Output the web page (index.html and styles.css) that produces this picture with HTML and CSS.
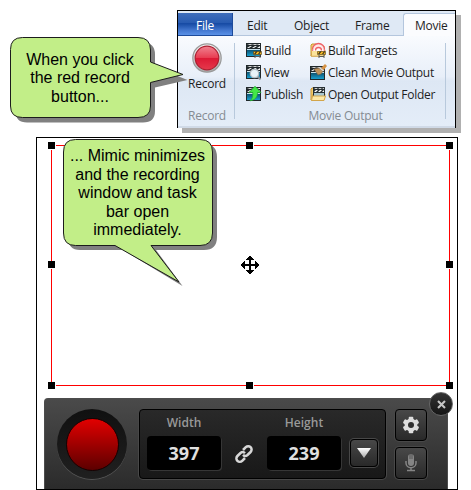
FILE: index.html
```html
<!DOCTYPE html>
<html lang="en">
<head>
<meta charset="utf-8">
<title>Mimic recording</title>
<link rel="stylesheet" href="styles.css">
</head>
<body>
<svg width="0" height="0" class="defs">
  <defs>
    <linearGradient id="clapBody" x1="0" y1="0" x2="0" y2="1"><stop offset="0" stop-color="#0d5270"/><stop offset="1" stop-color="#18a0d0"/></linearGradient>
    <g id="clap">
      <path d="M0 1h15v14H0z" fill="#20282b"/>
      <path d="M1 2l3 1h3l-3-1zM6 2l3 1h3l-3-1zM11 2l2 1h1V2zM1 6l3-2h2L3 6zM6 6l3-2h2L8 6zM11 6l3-2v2z" fill="#f4f4f4"/>
      <path d="M1 8h13v6H1z" fill="url(#clapBody)"/>
      <path d="M1 7h13v1H1z" fill="#c8e2ec"/>
    </g>
    <g id="folder">
      <path d="M1 14V3l1-1h4l1 2h7v10z" fill="#f4cf70" stroke="#c99634"/>
      <path d="M1 14l2-6h12l-1 6z" fill="#fde9a6" stroke="#d5a648"/>
    </g>
    <g id="barrier">
      <path d="M7.500 9.500h8v3h-8z" fill="#f6b71d" stroke="#4b3c18" stroke-width=".6"/>
      <path d="M8 12l2-2.500h1.500l-2 2.500zM12 12l2-2.500h1.300l-2 2.500z" fill="#30291b"/>
      <path d="M9 12.500V16M14 12.500V16M9 14.500h5" stroke="#5b5b58"/>
    </g>
  </defs>
</svg>
<main class="stage">
  <section class="ribbon">
    <nav class="tabs">
      <span class="tab file">File</span><span class="tab edit">Edit</span><span class="tab object">Object</span><span class="tab frame">Frame</span><span class="tab movie">Movie</span>
    </nav>
    <div class="groups">
      <div class="group record">
        <svg width="30" height="30" viewBox="0 0 30 30">
          <defs>
            <linearGradient id="ring" x2="0" y2="1"><stop stop-color="#f6f6f6"/><stop offset="1" stop-color="#aaa"/></linearGradient>
            <linearGradient id="red" x2="0" y2="1"><stop stop-color="#f08391"/><stop offset=".48" stop-color="#e83e53"/><stop offset=".5" stop-color="#dc1834"/><stop offset="1" stop-color="#e5394c"/></linearGradient>
          </defs>
          <circle cx="15" cy="15" r="14.200" fill="url(#ring)" stroke="#999" stroke-width="1.200"/>
          <circle cx="15" cy="15" r="11.800" fill="url(#red)" stroke="#ac1e30" stroke-width="1.200"/>
        </svg>
        <span class="big-label">Record</span>
        <span class="caption">Record</span>
      </div>
      <div class="group output">
        <div class="commands">
          <div class="column first">
            <div class="cmd"><svg width="17" height="17" viewBox="0 0 17 17"><use href="#clap"/><use href="#barrier"/></svg><span>Build</span></div>
            <div class="cmd"><svg width="17" height="17" viewBox="0 0 17 17"><use href="#clap"/><path d="M11 12l3.500 3.500" stroke="#8b9298" stroke-width="2"/><circle cx="8.500" cy="9.500" r="4.200" fill="#e8f3f8" stroke="#b3bdc4" stroke-width="1.300"/></svg><span>View</span></div>
            <div class="cmd"><svg width="17" height="17" viewBox="0 0 17 17"><use href="#clap"/><path d="M9 .2l6 6.300h-3.500c0 4.500-2 7.500-7.500 8.300 2.500-2 3-4.800 2.800-8.300H3z" fill="#43e847" stroke="#20aa30" stroke-width=".7"/></svg><span>Publish</span></div>
          </div>
          <div class="column">
            <div class="cmd"><svg width="17" height="17" viewBox="0 0 17 17"><use href="#folder"/><path d="M2.500 9a6 6 0 0 1 12 0" fill="#fff" stroke="#ee7b80" stroke-width="1.400"/><path d="M2.500 7.500a6 6 0 0 1 12 0" fill="#ffe9e8" stroke="#ee6267" stroke-width="1.300"/><path d="M5.500 8.500a3 3 0 0 1 6 0" fill="#fff" stroke="#ee6267" stroke-width="1.300"/><path d="M2 9h12v4.500H2z" fill="#fbe39b"/><use href="#barrier"/></svg><span>Build Targets</span></div>
            <div class="cmd"><svg width="17" height="17" viewBox="0 0 17 17"><use href="#clap" y="1"/><path d="M11 4l4-4 2 2-4 5z" fill="#d49245"/><path d="M4 5l5-1 4 3-2 3-3 1z" fill="#be935c" stroke="#735a3f" stroke-width=".6"/><path d="M9.500 3.500l4 3.500" stroke="#ddd" stroke-width="1.500"/></svg><span>Clean Movie Output</span></div>
            <div class="cmd"><svg width="17" height="17" viewBox="0 0 17 17"><use href="#folder"/><path d="M3 1h12v9H3z" fill="#273034"/><path d="M4 2l2 1h2L6 2zM8 2l2 1h2l-2-1zM12 2l2 1V2zM4 6l2-2h2L6 6zM8 6l2-2h2l-2 2zM12 6l2-2v2z" fill="#fff"/><path d="M4 7h10v3H4z" fill="#a9c7cf"/><path d="M1.500 14.500l1-4.500h13l-1.500 4.500z" fill="#fde8a6" stroke="#d2a54a"/></svg><span>Open Output Folder</span></div>
          </div>
        </div>
        <span class="caption">Movie Output</span>
      </div>
    </div>
  </section>

  <section class="screen">
    <div class="selection">
      <i class="handle nw"></i><i class="handle n"></i><i class="handle ne"></i>
      <i class="handle w"></i><i class="handle e"></i>
      <i class="handle sw"></i><i class="handle s"></i><i class="handle se"></i>
      <svg class="move" width="18" height="18" viewBox="0 0 18 18" shape-rendering="crispEdges"><path d="M8 4H5V3h1V2h1V1h1V0h2v1h1v1h1v1h1v1h-3v4h4V5h1v1h1v1h1v1h1v2h-1v1h-1v1h-1v1h-1v-3h-4v4h3v1h-1v1h-1v1h-1v1H8v-1H7v-1H6v-1H5v-1h3v-4H4v3H3v-1H2v-1H1v-1H0V8h1V7h1V6h1V5h1v3h4z"/></svg>
    </div>
    <div class="recorder">
      <div class="rec-ring"><div class="rec-dot"></div></div>
      <div class="size-box">
        <div class="field"><span>Width</span><b>397</b></div>
        <svg class="link" width="20" height="20" viewBox="0 0 20 20"><g fill="none" stroke="#d7d7d7" stroke-width="2.500"><path d="M9 6l2.800-2.800a3.250 3.250 0 0 1 4.800 4.800L13.500 11a3.250 3.250 0 0 1-4.500-.2"/><path d="M11 14l-2.800 2.800a3.250 3.250 0 0 1-4.800-4.800L6.500 9A3.250 3.250 0 0 1 11 9.200"/></g></svg>
        <div class="field"><span>Height</span><b>239</b></div>
        <div class="btn drop"><svg width="14" height="10" viewBox="0 0 14 10"><defs><linearGradient id="arrow" x2="0" y2="1"><stop stop-color="#fff"/><stop offset="1" stop-color="#aaa"/></linearGradient></defs><path d="M0 0h14L7 10z" fill="url(#arrow)"/></svg></div>
      </div>
      <div class="tools">
        <div class="btn"><svg width="18" height="18" viewBox="-9 -9 18 18"><g fill="#dedede"><circle r="6.400"/><rect x="-2.300" y="-8.200" width="4.600" height="16.400" rx="1"/><rect x="-2.300" y="-8.200" width="4.600" height="16.400" rx="1" transform="rotate(60)"/><rect x="-2.300" y="-8.200" width="4.600" height="16.400" rx="1" transform="rotate(120)"/></g><circle r="3" fill="#303030"/></svg></div>
        <div class="btn"><svg width="14" height="18" viewBox="0 0 14 18"><rect x="4" y="0" width="6" height="12" rx="3" fill="#858585"/><path d="M6 0v5M8 0v5" stroke="#444" stroke-width=".7"/><path d="M2 7v2c0 6.300 10 6.300 10 0V7M7 14v3M3 16.500h8" fill="none" stroke="#858585" stroke-width="1.500"/></svg></div>
      </div>
      <div class="close"><svg width="9" height="9" viewBox="0 0 9 9"><path d="M1 1l7 7M8 1L1 8" stroke="#c6c6c6" stroke-width="2.100"/></svg></div>
    </div>
  </section>

  <aside class="callout one">
    <svg width="182" height="90" viewBox="0 0 182 90">
      <path d="M17 5.500H133Q145 5.500 145 17.500V30L177.500 43L145 50.500V74Q145 85.500 133 85.500H17Q5.500 85.500 5.500 74V17.500Q5.500 5.500 17 5.500Z" fill="#808080"/>
      <path d="M12.500 .5H128Q140.500 .5 140.500 13V25L173 37.500L140.500 45.500V69Q140.500 80.500 128 80.500H12.500Q.5 80.500 .5 69V12.500Q.5 .5 12.500 .5Z" fill="#c2ee88" stroke="#1c1c1c"/>
    </svg>
    <p><span>When you click</span><span>the red record</span><span>button...</span></p>
  </aside>
  <aside class="callout two">
    <svg width="160" height="150" viewBox="0 0 160 150">
      <path d="M17 5H141Q154 5 154 18V98Q154 111 141 111H93L119.500 147L60 111H17Q5 111 5 98V17Q5 5 17 5Z" fill="#808080"/>
      <path d="M12.500 .5H137Q149.500 .5 149.500 13V94Q149.500 106.500 137 106.500H88L116 143L52 106.500H12.500Q.5 106.500 .5 94V13Q.5 .5 12.500 .5Z" fill="#c2ee88" stroke="#1c1c1c"/>
    </svg>
    <p><span>... Mimic minimizes</span><span>and the recording</span><span>window and task</span><span>bar open</span><span>immediately.</span></p>
  </aside>
</main>
</body>
</html>
```
FILE: styles.css
```css
* { box-sizing: border-box; }
html, body { margin: 0; background: #fff; overflow: hidden; }
.defs { position: absolute; }
svg { display: block; flex: none; }
.stage { position: relative; width: 471px; height: 490px; padding-top: 10px; overflow: hidden; }

.ribbon {
  width: 279px; height: 118px; margin-left: 177px;
  border: 1px solid #000; border-bottom-width: 2px;
  box-shadow: 5px 5px 0 #b0b0b0;
  font: 12px/16px "Open Sans", "Noto Sans", sans-serif; color: #1e1e1e;
  background: #dfe9f5;
  display: flex; flex-direction: column;
}
.tabs { display: flex; height: 25px; padding-top: 2px; border-bottom: 1px solid #b4c6dd; letter-spacing: -.25px; }
.tab { height: 23px; padding-top: 5px; line-height: 16px; white-space: nowrap; }
.file { width: 55px; padding-left: 18px; color: #fff; background: linear-gradient(#3e6dbb, #285bb1 45%, #164aa4 48%, #4579d1 80%, #5a91e6); border: 1px solid #1d4b9b; border-width: 0 1px 1px 0; }
.edit { width: 61px; padding-left: 14px; }
.object { width: 61px; }
.frame { width: 48px; }
.movie { flex: 1; height: 24px; margin-bottom: -1px; padding-left: 11px; background: #fbfcfe; border: 1px solid #b4c6dd; border-width: 1px 0 0 1px; border-radius: 3px 0 0 0; padding-top: 4px; }
.groups { flex: 1; display: flex; padding: 7px 9px 7px 0; background: linear-gradient(#f9fbfe, #e8eff9 45%, #dde7f4 50%, #e4edf8); border-bottom: 2px solid #d0dae7; }
.group { border-right: 1px solid #b8c9dc; display: flex; flex-direction: column; }
.record { width: 57px; align-items: center; padding-left: 2px; }
.big-label { margin-top: 3px; letter-spacing: -.25px; }
.caption { color: #858b92; margin-top: auto; margin-bottom: -5px; letter-spacing: -.25px; text-align: center; }
.output { flex: 1; padding-left: 11px; }
.commands { display: flex; margin-top: -1px; }
.column { display: grid; grid-template-rows: repeat(3, 22px); }
.first { width: 64px; }
.cmd { display: flex; gap: 1px; align-items: flex-start; white-space: nowrap; letter-spacing: -.3px; }
.cmd span { padding-top: 1px; }

.screen { width: 422px; height: 353px; margin: 9px 0 0 36px; border: 1px solid #000; padding: 7px 0 0 14px; }
.selection { position: relative; width: 399px; height: 241px; border: 1px solid #f00; }
.handle { position: absolute; width: 7px; height: 7px; background: #000; box-shadow: 1px 1px 0 #fff; }
.nw, .n, .ne { top: -4px; }
.w, .e { top: 115px; }
.sw, .s, .se { bottom: -4px; }
.nw, .w, .sw { left: -4px; }
.n, .s { left: 194px; }
.ne, .e, .se { right: -4px; }
.move { position: absolute; left: 189px; top: 110px; }

.recorder { position: relative; width: 404px; height: 91px; margin: 12px 0 0 -7px; padding: 10px 20px 0 12px; display: flex; border-radius: 4px 4px 0 0; background: linear-gradient(#4a4a4a, #2b2b2b); border: 1px solid #4c4c4c; border-bottom: 0; font-family: "Open Sans", "Noto Sans", sans-serif; }
.rec-ring { width: 70px; height: 70px; border-radius: 50%; background: linear-gradient(#101010, #202020); box-shadow: 0 1px 0 #555; display: grid; place-items: center; }
.rec-dot { width: 53px; height: 53px; border: 1px solid #180000; border-radius: 50%; background: linear-gradient(#e20000, #5c0000); }
.size-box { width: 247px; height: 70px; margin-left: 12px; border: 1px solid #000; border-radius: 4px; background: linear-gradient(#292929, #181818); box-shadow: 0 0 0 1px #484848; display: flex; padding: 4px 7px 0; }
.field { width: 74px; display: flex; flex-direction: column; font-size: 12px; line-height: 18px; color: #999; font-weight: 600; text-align: center; }
.field b { height: 34px; margin-top: 4px; background: #000; border-radius: 4px; box-shadow: 1px 1px 0 #363636; color: #e0e0e0; font-size: 18px; font-weight: 700; line-height: 34px; letter-spacing: 0; }
.link { margin: 30px 13px 0; }
.btn { width: 32px; height: 32px; border: 1px solid #000; border-radius: 4px; background: linear-gradient(#484848, #292929); box-shadow: 0 0 0 1px #484848; display: grid; place-items: center; }
.drop { width: 28px; height: 28px; margin: 25px 0 0 9px; }
.tools { display: flex; flex-direction: column; gap: 6px; margin-left: 9px; }
.close { position: absolute; right: -6px; top: -7px; width: 24px; height: 24px; border-radius: 50%; border: 1px solid #666; background: linear-gradient(#333, #151515); display: grid; place-items: center; }

.callout { position: absolute; font: 16px/18.500px "Liberation Sans", Arial, sans-serif; color: #000; }
.callout p { position: absolute; margin: 0; left: 0; text-align: center; white-space: nowrap; }
.callout span { display: block; }
.one { left: 10px; top: 37px; }
.one p { top: 13.500px; width: 140px; }
.two { left: 63px; top: 139px; }
.two p { top: 8px; width: 149px; }
```
